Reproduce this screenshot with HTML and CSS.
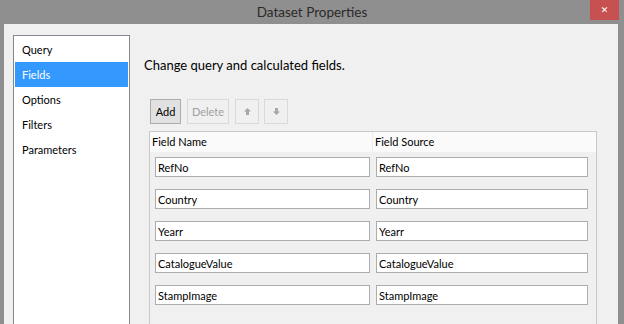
FILE: index.html
```html
<!DOCTYPE html>
<html lang="en">
<head>
  <meta charset="UTF-8">
  <meta name="viewport" content="width=device-width, initial-scale=1.0">
  <title>Dataset Properties</title>
  <link rel="stylesheet" href="styles.css">
</head>
<body>
  <div class="titlebar">
    <span></span>
    <span class="title">Dataset Properties</span>
    <button class="close-btn">&#x2715;</button>
  </div>
  <div class="client">
    <ul class="nav">
      <li>Query</li>
      <li class="selected">Fields</li>
      <li>Options</li>
      <li>Filters</li>
      <li>Parameters</li>
    </ul>
    <div class="content">
      <p class="heading">Change query and calculated fields.</p>
      <div class="toolbar">
        <button class="btn add-btn">Add</button>
        <button class="btn delete-btn" disabled>Delete</button>
        <button class="btn icon-btn" disabled>
          <svg width="7" height="7" viewBox="0 0 7 7"><path d="M3.5 0 L7 3.5 H5 V7 H2 V3.5 H0 Z" fill="#a8a8a8"/></svg>
        </button>
        <button class="btn icon-btn down-btn" disabled>
          <svg width="7" height="7" viewBox="0 0 7 7"><path d="M3.5 7 L7 3.5 H5 V0 H2 V3.5 H0 Z" fill="#a8a8a8"/></svg>
        </button>
      </div>
      <div class="grid">
        <div class="grid-head">
          <div class="col-name">Field Name</div>
          <div class="col-source">Field Source</div>
        </div>
        <div id="grid-rows"></div>
      </div>
    </div>
  </div>

  <script>
    // fields of the dataset
    const fields = [
      { name: "RefNo", source: "RefNo" },
      { name: "Country", source: "Country" },
      { name: "Yearr", source: "Yearr" },
      { name: "CatalogueValue", source: "CatalogueValue" },
      { name: "StampImage", source: "StampImage" }
    ];

    const gridRows = document.getElementById('grid-rows');

    fields.forEach(field => {
      const row = document.createElement('div');
      row.classList.add('grid-row');
      row.innerHTML = `
        <input class="field-name" type="text" value="${field.name}">
        <input class="field-source" type="text" value="${field.source}">
      `;
      gridRows.appendChild(row);
    });
  </script>
</body>
</html>
```

FILE: styles.css
```css
/* Dataset Properties dialog */
body {
  margin: 0;
  padding: 0;
  width: 624px;
  height: 324px;
  overflow: hidden;
  background-color: #8f8f8f;
  font-family: Lato, "Noto Sans", Arial, sans-serif;
  font-size: 11px;
  color: #000;
}
.titlebar {
  height: 24px;
  display: grid;
  grid-template-columns: 1fr auto 1fr;
  align-items: start;
}
.title {
  line-height: 25px;
  font-size: 13.5px;
  color: #2a2a2a;
}
.close-btn {
  justify-self: end;
  margin-right: 5px;
  width: 29px;
  height: 20px;
  border: none;
  padding: 0;
  background-color: #c75050;
  color: #fff;
  font-size: 9px;
  font-weight: bold;
  font-family: "DejaVu Sans", sans-serif;
}
.client {
  margin: 0 6px 0 4px;
  height: 300px;
  background-color: #f0f0f0;
  display: flex;
  padding: 11px 0 0 9px;
  box-sizing: border-box;
}
.nav {
  list-style: none;
  margin: 0;
  padding: 1px;
  width: 117px;
  box-sizing: border-box;
  height: 300px;
  background-color: #fff;
  border: 1px solid #828790;
}
.nav li {
  height: 25px;
  line-height: 25px;
  padding-left: 7px;
}
.nav li.selected {
  background-color: #3399ff;
  color: #fff;
}
.content {
  margin-left: 14px;
  flex: 1;
}
.heading {
  margin: 20px 0 0;
  font-size: 13px;
  line-height: 20px;
}
.toolbar {
  display: flex;
  gap: 6px;
  margin-top: 24px;
  padding-left: 6px;
}
.btn {
  height: 25px;
  padding: 0;
  font-family: inherit;
  font-size: 11px;
  color: #000;
  background-color: #e1e1e1;
  border: 1px solid #adadad;
}
.btn:disabled {
  color: #a0a0a0;
  background-color: #f0f0f0;
  border-color: #d9d9d9;
}
.add-btn {
  width: 31px;
}
.delete-btn {
  width: 42px;
}
.icon-btn {
  width: 24px;
  display: flex;
  align-items: center;
  justify-content: center;
}
.down-btn {
  margin-left: -1px;
}
.grid {
  margin: 7px 0 0 5px;
  width: 448px;
  height: 200px;
  box-sizing: border-box;
  border: 1px solid #c8c8c8;
  border-bottom: none;
}
.grid-head {
  display: flex;
  height: 20px;
  line-height: 20px;
  background-color: #fafafa;
}
.grid-head div {
  width: 223px;
  padding-left: 2px;
  box-sizing: border-box;
}
.col-name {
  border-right: 1px solid #ececec;
}
.grid-row {
  height: 32px;
  display: flex;
  align-items: flex-start;
  padding: 5px 0 0 5px;
  box-sizing: border-box;
}
.grid-row input {
  height: 20px;
  box-sizing: border-box;
  margin: 0;
  padding: 0 2px;
  border: 1px solid #abadb3;
  background-color: #fff;
  font-family: inherit;
  font-size: 11px;
  color: #000;
}
.field-name {
  width: 215px;
}
.field-source {
  width: 212px;
  margin-left: 6px !important;
}
```
